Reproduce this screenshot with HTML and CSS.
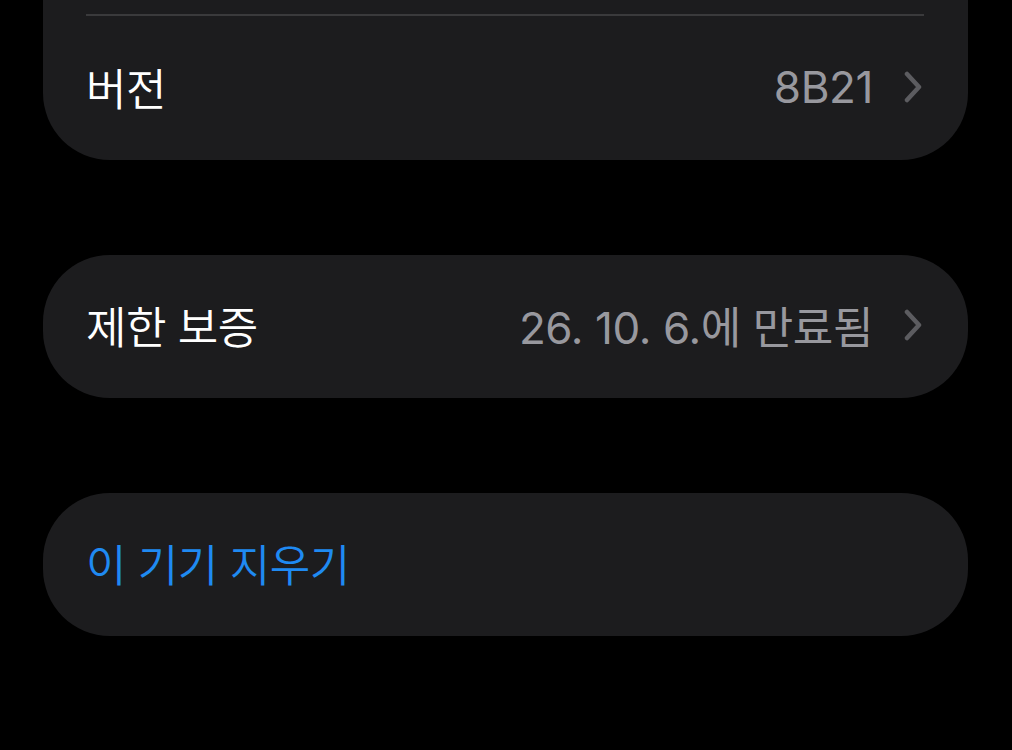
FILE: index.html
```html
<!DOCTYPE html>
<html lang="ko">

<head>
  <meta charset="UTF-8">
  <meta name="viewport" content="width=device-width, initial-scale=1.0">
  <title>정보</title>
  <link rel="stylesheet" href="styles.css">
</head>

<body>
  <main class="settings">
    <section class="group group-top">
      <div class="separator"></div>
      <div class="row">
        <span class="label">버전</span>
        <span class="value">8B21</span>
        <svg class="chevron" viewBox="0 0 18 32" aria-hidden="true">
          <path d="M3 3 L15 16 L3 29" />
        </svg>
      </div>
    </section>

    <section class="group">
      <div class="row">
        <span class="label">제한 보증</span>
        <span class="value">26. 10. 6.에 만료됨</span>
        <svg class="chevron" viewBox="0 0 18 32" aria-hidden="true">
          <path d="M3 3 L15 16 L3 29" />
        </svg>
      </div>
    </section>

    <section class="group">
      <div class="row">
        <span class="label action">이 기기 지우기</span>
      </div>
    </section>
  </main>
</body>

</html>
```

FILE: styles.css
```css
body {
  margin: 0;
  background: #000;
  font-family: Inter, "Noto Sans CJK KR", sans-serif;
  color: #fff;
  height: 750px;
  overflow: hidden;
}

.settings {
  display: flex;
  flex-direction: column;
  gap: 95px;
  padding: 0 44px 0 43px;
}

.group {
  background: #1c1c1e;
  border-radius: 67px;
}

.group-top {
  border-radius: 0 0 67px 67px;
  padding-top: 14px;
}

.separator {
  height: 2px;
  margin: 0 44px 0 43px;
  background: #3a3a3c;
}

.row {
  box-sizing: border-box;
  height: 143px;
  display: flex;
  align-items: center;
  padding: 0 46px 3px 43px;
  font-size: 44px;
  font-weight: 350;
}

.group-top .row {
  height: 144px;
}

.label {
  flex: 1;
  letter-spacing: -0.5px;
}

.value {
  color: #98989e;
  font-weight: 400;
  letter-spacing: -0.4px;
}

.action {
  color: #1f8af2;
}

.chevron {
  width: 18px;
  height: 32px;
  margin-left: 31px;
  fill: none;
  stroke: #5c5c60;
  stroke-width: 4.5;
  stroke-linecap: round;
  stroke-linejoin: round;
}
```
